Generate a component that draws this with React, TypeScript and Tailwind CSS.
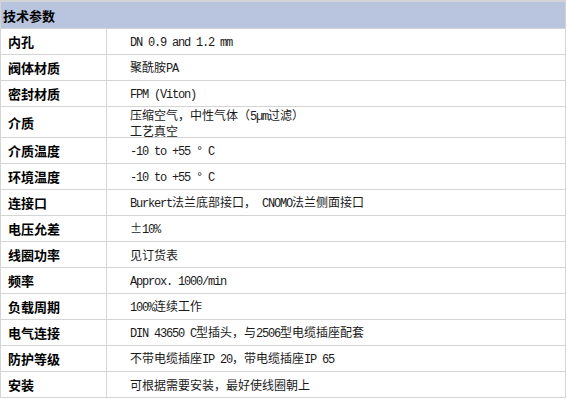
const rows: { label: string; value: string[]; tall?: boolean }[] = [
  { label: '内孔', value: ['DN 0.9 and 1.2 mm'] },
  { label: '阀体材质', value: ['聚酰胺PA'] },
  { label: '密封材质', value: ['FPM (Viton)'] },
  { label: '介质', value: ['压缩空气，中性气体（5µm过滤）', '工艺真空'], tall: true },
  { label: '介质温度', value: ['-10 to +55 ° C'] },
  { label: '环境温度', value: ['-10 to +55 ° C'] },
  { label: '连接口', value: ['Burkert法兰底部接口， CNOMO法兰侧面接口'] },
  { label: '电压允差', value: ['±10%'] },
  { label: '线圈功率', value: ['见订货表'] },
  { label: '频率', value: ['Approx. 1000/min'] },
  { label: '负载周期', value: ['100%连续工作'] },
  { label: '电气连接', value: ['DIN 43650 C型插头，与2506型电缆插座配套'] },
  { label: '防护等级', value: ['不带电缆插座IP 20，带电缆插座IP 65'] },
  { label: '安装', value: ['可根据需要安装，最好使线圈朝上'] },
];

// latin runs get a narrow mono face, the rest stays in the CJK face
function Mixed({ text }: { text: string }) {
  const parts = text.split(/([\x20-\x7e°µ]+)/).filter((p) => p.length > 0);
  return (
    <>
      {parts.map((p, i) =>
        /^[\x20-\x7e°µ]+$/.test(p) ? (
          <span key={i} className="font-['Liberation_Mono',monospace] text-[12px] tracking-[-1.2px] whitespace-pre">
            {p}
          </span>
        ) : (
          <span key={i}>{p}</span>
        )
      )}
    </>
  );
}

export default function App() {
  return (
    <div className="w-[567px] h-[399px] bg-white font-['Noto_Sans_CJK_SC',sans-serif] text-black">
      <div className="w-[566px] border-l border-r border-t-2 border-[#d4d4d4]">
        <div className="h-[27px] bg-[#b9c5de] border-b border-[#d4d4d4] flex items-center pl-[2px]">
          <span className="text-[13px] font-bold leading-none">技术参数</span>
        </div>
        {rows.map((row, i) => (
          <div
            key={i}
            className={`flex border-b border-[#d4d4d4] ${row.tall ? 'h-[31px]' : 'h-[26px]'}`}
          >
            <div className="w-[106px] shrink-0 border-r border-[#d4d4d4] flex items-center pl-[7px]">
              <span className="text-[13px] font-bold leading-none">{row.label}</span>
            </div>
            <div className="flex-1 flex flex-col justify-center pl-[23px] text-[12px] leading-[13px] text-[#1a1a1a]">
              {row.value.map((v, j) => (
                <div key={j} className="whitespace-nowrap">
                  <Mixed text={v} />
                </div>
              ))}
            </div>
          </div>
        ))}
      </div>
    </div>
  );
}
